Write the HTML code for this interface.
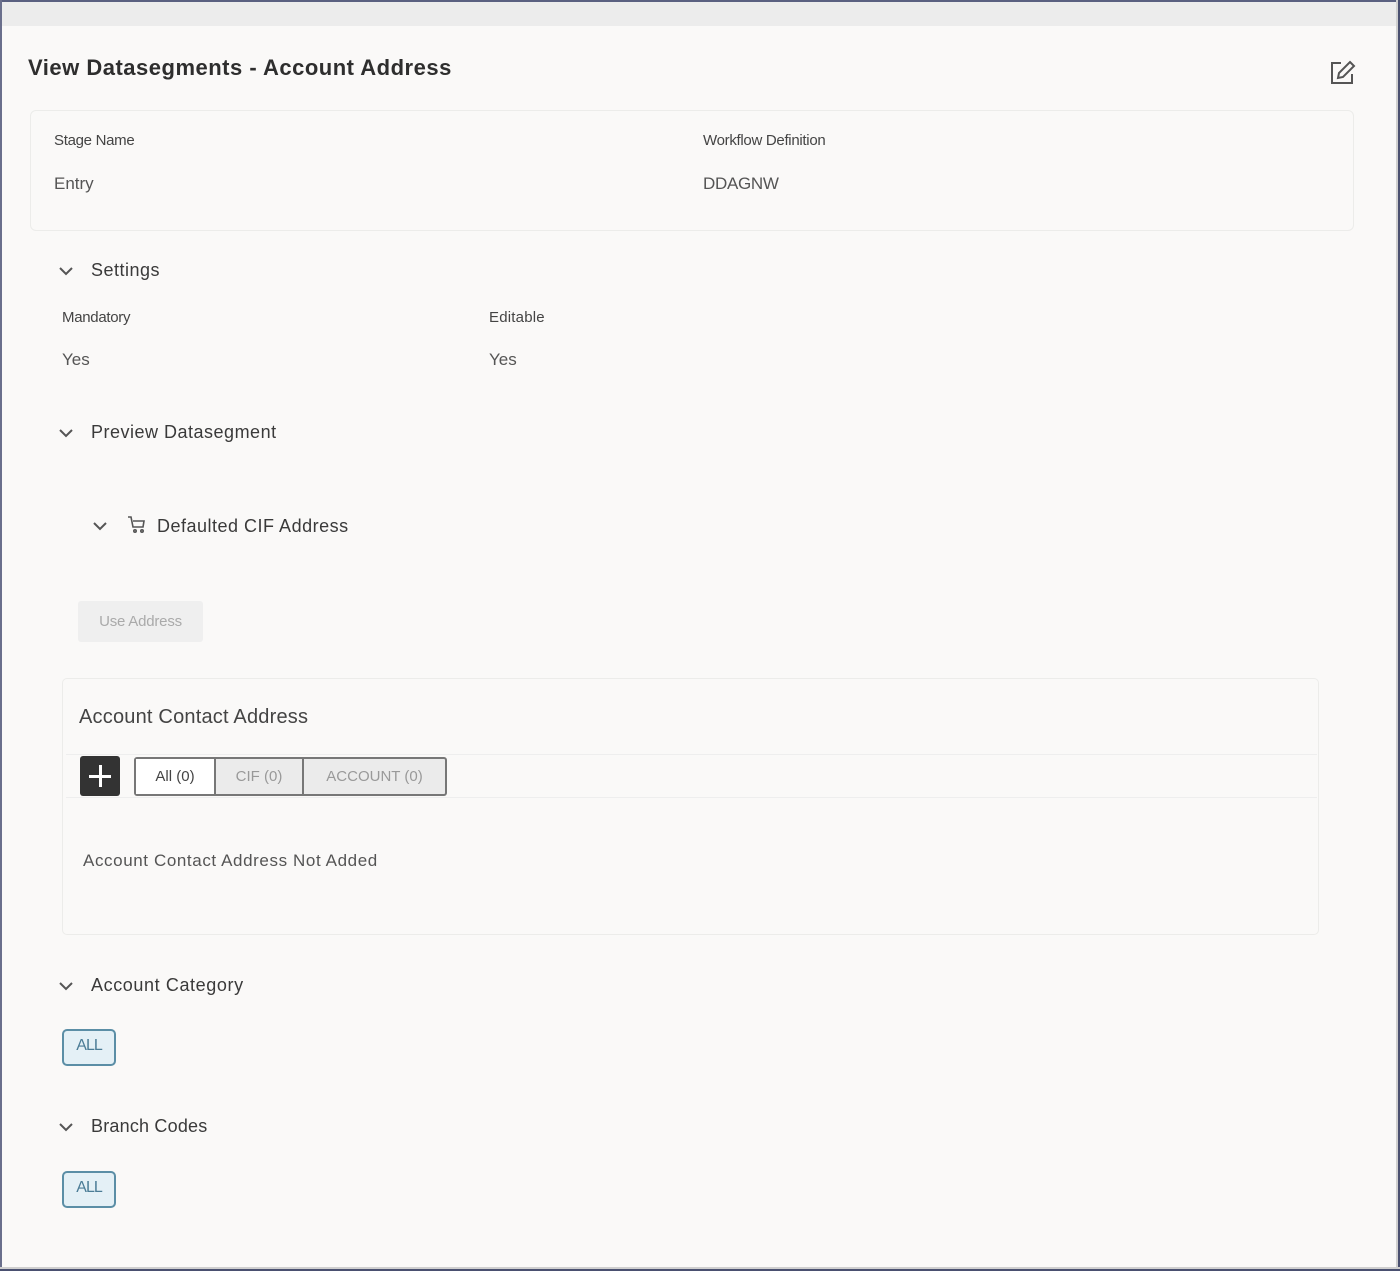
<!DOCTYPE html>
<html><head><meta charset="utf-8"><style>
*{margin:0;padding:0;box-sizing:border-box}
body{width:1400px;height:1271px;background:#faf9f8;font-family:"Liberation Sans",sans-serif;color:#333;position:relative;overflow:hidden}
.a{position:absolute;white-space:nowrap}
.t{position:absolute;white-space:nowrap;line-height:20px}
.chev{position:absolute;width:16px;height:10px}
.chip{position:absolute;width:54px;height:37px;border:2px solid #5b8ea6;border-radius:5px;background:#e4f0f6;color:#4b7c96;font-size:16px;text-align:center;line-height:30px;letter-spacing:-1px}
</style></head><body>
<div class="a" style="left:0;top:0;width:1400px;height:2px;background:#5a6080"></div>
<div class="a" style="left:0;top:0;width:2px;height:1271px;background:#6a6f8c"></div>
<div class="a" style="left:2px;top:2px;width:1394px;height:24px;background:#ececec"></div>
<div class="a" style="left:1396px;top:0;width:2px;height:1271px;background:#cfcfcf"></div>
<div class="a" style="left:1398px;top:0;width:2px;height:1271px;background:#4a5070"></div>
<div class="a" style="left:0;top:1267px;width:1400px;height:2px;background:#cfcfcf"></div>
<div class="a" style="left:0;top:1269px;width:1400px;height:2px;background:#4a5070"></div>

<div class="t" style="left:28px;top:56px;line-height:24px;font-size:22px;font-weight:bold;color:#2e2e2e;letter-spacing:0.5px">View Datasegments - Account Address</div>
<svg class="a" style="left:1329px;top:60px" width="28" height="26" viewBox="0 0 28 26" fill="none" stroke="#555" stroke-width="2"><path d="M12 3H3v20h20v-9"/><path d="M21 2l4 4-11 11-5 1 1-5z"/></svg>

<div class="a" style="left:30px;top:110px;width:1324px;height:121px;border:1px solid #ececea;border-radius:6px"></div>
<div class="t" style="left:54px;top:131px;font-size:15px;color:#444;letter-spacing:-0.3px">Stage Name</div>
<div class="t" style="left:54px;top:174px;font-size:17px;color:#555">Entry</div>
<div class="t" style="left:703px;top:131px;font-size:15px;color:#444;letter-spacing:-0.3px">Workflow Definition</div>
<div class="t" style="left:703px;top:174px;font-size:17px;color:#555;letter-spacing:-0.3px">DDAGNW</div>

<svg class="chev" style="left:58px;top:266px" viewBox="0 0 16 10"><path d="M2 2l6 6 6-6" stroke="#555" stroke-width="2" fill="none"/></svg>
<div class="t" style="left:91px;top:260px;font-size:18px;color:#3a3a3a;letter-spacing:0.5px">Settings</div>
<div class="t" style="left:62px;top:308px;font-size:15px;color:#444;letter-spacing:-0.3px">Mandatory</div>
<div class="t" style="left:62px;top:350px;font-size:17px;color:#555">Yes</div>
<div class="t" style="left:489px;top:308px;font-size:15px;color:#444;letter-spacing:0.2px">Editable</div>
<div class="t" style="left:489px;top:350px;font-size:17px;color:#555">Yes</div>

<svg class="chev" style="left:58px;top:428px" viewBox="0 0 16 10"><path d="M2 2l6 6 6-6" stroke="#555" stroke-width="2" fill="none"/></svg>
<div class="t" style="left:91px;top:422px;font-size:18px;color:#3a3a3a;letter-spacing:0.5px">Preview Datasegment</div>

<svg class="chev" style="left:92px;top:521px" viewBox="0 0 16 10"><path d="M2 2l6 6 6-6" stroke="#555" stroke-width="2" fill="none"/></svg>
<svg class="a" style="left:127px;top:515px" width="20" height="20" viewBox="0 0 20 20" fill="none" stroke="#555" stroke-width="1.6"><path d="M1 2h3l2 10h10l1-6H6"/><circle cx="8" cy="16" r="1.2"/><circle cx="15" cy="16" r="1.2"/></svg>
<div class="t" style="left:157px;top:516px;font-size:18px;color:#3a3a3a;letter-spacing:0.5px">Defaulted CIF Address</div>

<div class="a" style="left:78px;top:601px;width:125px;height:41px;background:#efefef;border-radius:3px;color:#aaa;font-size:15px;text-align:center;line-height:41px;letter-spacing:-0.2px">Use Address</div>

<div class="a" style="left:62px;top:678px;width:1257px;height:257px;border:1px solid #ececea;border-radius:5px"></div>
<div class="t" style="left:79px;top:707px;font-size:20px;color:#444;letter-spacing:0.2px">Account Contact Address</div>
<div class="a" style="left:66px;top:754px;width:1251px;height:44px;border-top:1px solid #eee;border-bottom:1px solid #eee"></div>
<div class="a" style="left:80px;top:756px;width:40px;height:40px;background:#333;border-radius:3px"></div>
<div class="a" style="left:89px;top:775px;width:22px;height:3px;background:#fff"></div>
<div class="a" style="left:98.5px;top:765px;width:3px;height:22px;background:#fff"></div>
<div class="a" style="left:134px;top:757px;width:313px;height:39px;border:2px solid #777;border-radius:3px;background:#ebebeb"></div>
<div class="a" style="left:136px;top:759px;width:80px;height:35px;background:#fff;border-right:2px solid #777;font-size:15px;color:#444;text-align:center;line-height:35px">All (0)</div>
<div class="a" style="left:216px;top:759px;width:88px;height:35px;border-right:2px solid #777;font-size:15px;color:#999;text-align:center;line-height:35px">CIF (0)</div>
<div class="a" style="left:304px;top:759px;width:141px;height:35px;font-size:15px;color:#999;text-align:center;line-height:35px">ACCOUNT (0)</div>
<div class="t" style="left:83px;top:851px;font-size:17px;color:#555;letter-spacing:0.6px">Account Contact Address Not Added</div>

<svg class="chev" style="left:58px;top:981px" viewBox="0 0 16 10"><path d="M2 2l6 6 6-6" stroke="#555" stroke-width="2" fill="none"/></svg>
<div class="t" style="left:91px;top:975px;font-size:18px;color:#3a3a3a;letter-spacing:0.6px">Account Category</div>
<div class="chip" style="left:62px;top:1029px">ALL</div>

<svg class="chev" style="left:58px;top:1122px" viewBox="0 0 16 10"><path d="M2 2l6 6 6-6" stroke="#555" stroke-width="2" fill="none"/></svg>
<div class="t" style="left:91px;top:1116px;font-size:18px;color:#3a3a3a;letter-spacing:0.2px">Branch Codes</div>
<div class="chip" style="left:62px;top:1171px">ALL</div>
</body></html>
